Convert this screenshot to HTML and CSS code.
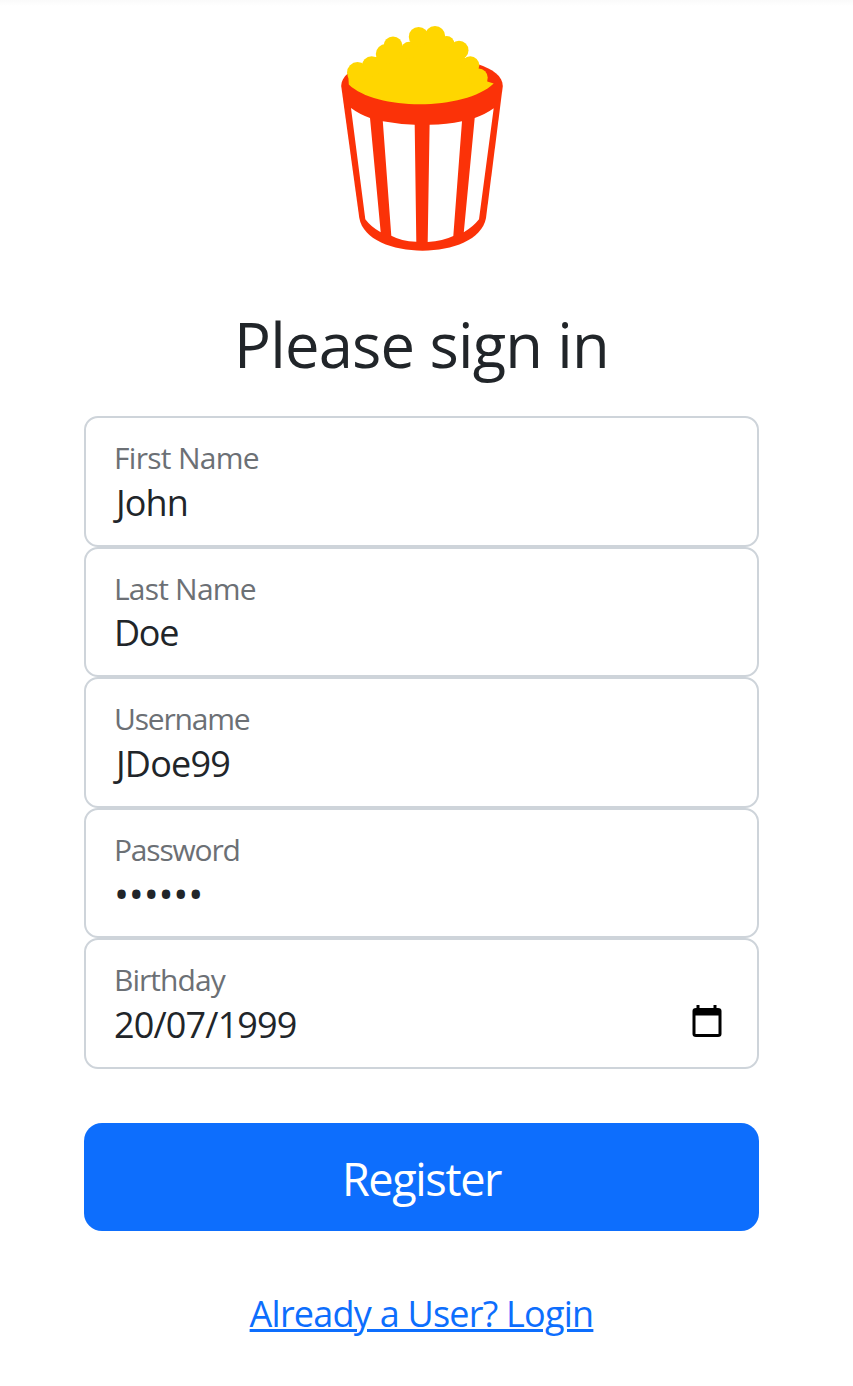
FILE: index.html
```html
<!DOCTYPE html>
<html lang="en">
<head>
<meta charset="utf-8">
<title>Register</title>
<link rel="stylesheet" href="styles.css">
</head>
<body>
<main class="page">
  <svg class="logo" viewBox="340 25 164 227" aria-hidden="true">
    <path fill="#fb3208" d="M341.2 86C341.2 47 502.8 47 502.8 86L486 218C478 261.500 367 261.500 359.300 218Z"/>
    <g fill="#fff">
      <path d="M351 108Q359 114 370 118L380.700 232.300Q371 227 365.300 219.300Z"/>
      <path d="M382.800 121.200Q398 124 414.700 124.700L416.300 241.800Q401 241 391.300 235.700Z"/>
      <path d="M429.600 124.800Q447 124.300 462 121.200L453.300 236Q443 241 427.700 241.900Z"/>
      <path d="M474.700 118Q486 114 493.700 108.300L479 219.300Q473 227 463.800 232.200Z"/>
    </g>
    <g fill="#ffd600">
      <path d="M348.800 84.500L348 70L372 60L386 50L410 45L419 36H435L448 45L462 55L472 65L487 77L487.300 81.500L493.700 83.500C465 111 376 111 348.800 84.500Z"/>
      <circle cx="357.500" cy="72.600" r="10.500"/>
      <circle cx="371.700" cy="66.300" r="10"/>
      <circle cx="385.800" cy="54" r="10"/>
      <circle cx="393" cy="46" r="9.500"/>
      <circle cx="409.300" cy="50.200" r="8.500"/>
      <circle cx="418.600" cy="36.800" r="9.800"/>
      <circle cx="435" cy="36.200" r="10.200"/>
      <circle cx="446.700" cy="43.500" r="7.600"/>
      <circle cx="459" cy="50.300" r="9.500"/>
      <circle cx="470.300" cy="65.300" r="9"/>
      <circle cx="478.700" cy="77.500" r="9"/>
    </g>
  </svg>
  <h1 class="title">Please sign in</h1>
  <form class="form">
    <div class="field"><span class="label label-first">First Name</span><span class="value value-first">John</span></div>
    <div class="field"><span class="label label-last">Last Name</span><span class="value value-last">Doe</span></div>
    <div class="field"><span class="label label-user">Username</span><span class="value value-user">JDoe99</span></div>
    <div class="field"><span class="label label-pass">Password</span><span class="value value-pass">••••••</span></div>
    <div class="field field-date">
      <div class="date-text"><span class="label label-birth">Birthday</span><span class="value value-birth">20/07/1999</span></div>
      <svg class="calendar" viewBox="0 0 30 32" aria-hidden="true"><path fill-rule="evenodd" d="M4.500 0H7.500V3H21.500V0H24.500V3H26Q29.500 3 29.500 6V29Q29.500 32 26 32H4Q.5 32 .5 29V6Q.5 3 4 3H4.500ZM3.500 10.500V29H26.500V10.500Z"/></svg>
    </div>
    <button class="submit" type="button">Register</button>
  </form>
  <a class="login" href="#">Already a User? Login</a>
</main>
</body>
</html>
```
FILE: styles.css
```css
* { box-sizing: border-box; }
body {
  margin: 0;
  background: linear-gradient(#fafafa, #fff 6px);
  color: #212529;
  font-family: "Open Sans", "Noto Sans", sans-serif;
}
.page {
  display: flex;
  flex-direction: column;
  align-items: center;
  width: 675px;
  height: 1386px;
  margin-left: 84px;
  padding-top: 25px;
}
.logo { width: 164px; height: 227px; flex: none; }
.title {
  margin: 55px 0 0;
  font-size: 61.500px;
  line-height: 74px;
  font-weight: 400;
  letter-spacing: -.8px;
  white-space: nowrap;
}
.form { width: 100%; margin-top: 35px; }
.field {
  display: flex;
  flex-direction: column;
  height: 130.500px;
  padding: 20px 28px 0;
  border: 2px solid #ced4da;
  border-radius: 14px;
}
.field-date { flex-direction: row; justify-content: space-between; }
.date-text { display: flex; flex-direction: column; }
.label {
  color: #6c7075;
  font-size: 30px;
  line-height: 40px;
  white-space: nowrap;
}
.label-first { letter-spacing: -.7px; }
.label-last { letter-spacing: -.8px; }
.label-user { letter-spacing: -1.200px; }
.label-pass { letter-spacing: -1.200px; }
.label-birth { letter-spacing: -.95px; }
.value {
  margin-top: .5px;
  font-size: 36px;
  line-height: 48px;
  white-space: nowrap;
}
.value-first { padding-left: 2px; letter-spacing: -.9px; }
.value-last { letter-spacing: -1.300px; }
.value-user { padding-left: 2px; letter-spacing: -.8px; }
.value-pass { font-size: 40px; letter-spacing: -.2px; }
.value-birth { letter-spacing: -.85px; }
.calendar { width: 30px; height: 32px; margin: 45px 7px 0 0; }
.submit {
  display: block;
  width: 100%;
  height: 108px;
  margin-top: 54px;
  padding: 5px 0 0;
  border: 0;
  border-radius: 18px;
  background: #0d6efd;
  color: #fff;
  font: 400 45px/60px "Open Sans", "Noto Sans", sans-serif;
  letter-spacing: -1.350px;
}
.login {
  margin-top: 58px;
  color: #0d6efd;
  font-size: 36px;
  line-height: 50px;
  letter-spacing: -.77px;
  white-space: nowrap;
  text-decoration-thickness: 3px;
}
```
